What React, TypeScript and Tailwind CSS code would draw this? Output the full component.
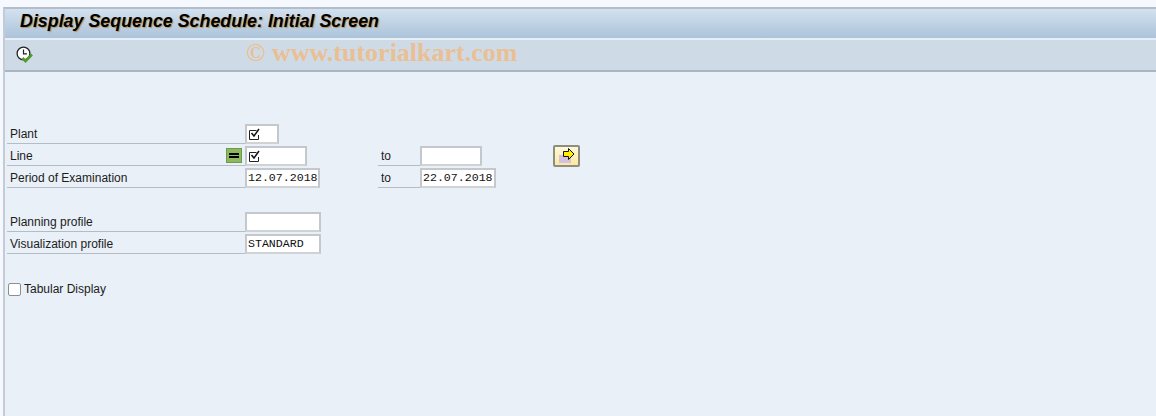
const labelFont = "font-['Liberation_Sans',sans-serif] text-[12px] text-[#1c1c1c]";
const monoFont = "font-['Liberation_Mono',monospace] text-[11.6px] text-[#111]";

function CheckMark() {
  return (
    <svg width="13" height="13" viewBox="0 0 13 13" className="shrink-0">
      <path d="M10.5 7v4.5h-9v-9h7" fill="none" stroke="#222" strokeWidth="1" />
      <path d="M3.5 5l2.5 3 5-7" fill="none" stroke="#111" strokeWidth="1.5" />
    </svg>
  );
}

function ClockIcon() {
  return (
    <svg width="18" height="18" viewBox="0 0 18 18">
      <circle cx="7.5" cy="7.5" r="6.4" fill="#fff" stroke="#222" strokeWidth="1.3" />
      <path d="M7.5 3.5v4.4h3.4" fill="none" stroke="#222" strokeWidth="1.2" />
      <path d="M6.5 12l3 3.2 6.5-6.7" fill="none" stroke="#4f9d2a" strokeWidth="2.6" />
    </svg>
  );
}

function ArrowIcon() {
  return (
    <svg width="16" height="16" viewBox="0 0 16 16">
      <rect x="0" y="7" width="12" height="8" fill="#d3c0e2" />
      <path d="M4.5 3.5h5v-3l5.5 5.5-5.5 5.5v-3h-5z" fill="#ffee00" stroke="#111" strokeWidth="1" />
    </svg>
  );
}

function Field({ width, value, check }: { width: string; value?: string; check?: boolean }) {
  return (
    <div className={`${width} h-[20px] bg-white border-2 border-[#c4c8cc] border-b-[#cfd3d6] flex items-center pl-[1px] ${monoFont}`}>
      {check ? <CheckMark /> : value}
    </div>
  );
}

function Row({ label, children }: { label: string; children?: React.ReactNode }) {
  return (
    <div className="h-[22px] flex items-end">
      <div className={`w-[238px] h-[22px] border-b border-[#b4bcc4] pl-[3px] flex items-center justify-between ${labelFont}`}>
        <span className="pt-[3px]">{label}</span>
      </div>
      {children}
    </div>
  );
}

function ToLabel() {
  return (
    <div className={`w-[42px] h-[22px] border-b border-[#b4bcc4] pl-[3px] flex items-center ${labelFont}`}>
      <span className="pt-[3px]">to</span>
    </div>
  );
}

export default function App() {
  return (
    <div className="relative w-[1156px] h-[416px] overflow-hidden bg-[#f5f8fc] flex flex-col pt-[7px]">
      <div className="flex-1 flex flex-col border-t-2 border-l-2 border-t-[#b3bccb] border-l-[#c3cbd8] ml-[3px] bg-[#e9f0f7]">
        <div className="h-[29px] bg-gradient-to-b from-[#d3e1ef] to-[#abc3da] pl-[15px] pb-[4px] flex items-center">
          <span className="font-['Liberation_Sans',sans-serif] italic font-bold text-[17.85px] text-black [text-shadow:1px_1px_1px_#b8905a]">
            Display Sequence Schedule: Initial Screen
          </span>
        </div>
        <div className="h-[34px] border-t-2 border-[#e6eef6] border-b-2 border-b-[#a9b5c6] bg-[#cedbe6] pl-[11px] flex items-center">
          <ClockIcon />
        </div>

        <div className="pl-[2px] pt-[50px]">
          <Row label="Plant">
            <Field width="w-[34px]" check />
          </Row>
          <Row label="Line">
            <Field width="w-[62px]" check />
            <div className="w-[71px]" />
            <ToLabel />
            <Field width="w-[62px]" />
            <div className="w-[71px]" />
            <div className="w-[27px] h-[22px] mb-[-1px] rounded-[2px] border-2 border-[#8e8e80] bg-gradient-to-b from-[#fff9d8] to-[#fde89c] flex items-center justify-center">
              <ArrowIcon />
            </div>
          </Row>
          <Row label="Period of Examination">
            <Field width="w-[75px]" value="12.07.2018" />
            <div className="w-[58px]" />
            <ToLabel />
            <Field width="w-[76px]" value="22.07.2018" />
          </Row>

          <div className="h-[22px]" />

          <Row label="Planning profile">
            <Field width="w-[76px]" />
          </Row>
          <Row label="Visualization profile">
            <Field width="w-[76px]" value="STANDARD" />
          </Row>

          <div className="mt-[26px] pl-[1px] flex items-center gap-[3px]">
            <div className="w-[13px] h-[13px] rounded-[2px] bg-white border border-[#8a8f94]" />
            <span className={labelFont}>Tabular Display</span>
          </div>
        </div>
      </div>

      {/* selection option button sits on top of the label cell */}
      <div className="absolute left-[226px] top-[148px] w-[16px] h-[15px] bg-[#8cb860] border border-[#6f9a48] flex flex-col items-center justify-center gap-[1px]">
        <div className="w-[10px] h-[2px] bg-black" />
        <div className="w-[10px] h-[2px] bg-black" />
      </div>

      {/* watermark */}
      <div className="absolute left-[246px] top-[33px] font-['Liberation_Serif',serif] font-bold text-[26px] text-[#eebd8b] opacity-90">
        © www.tutorialkart.com
      </div>
    </div>
  );
}
